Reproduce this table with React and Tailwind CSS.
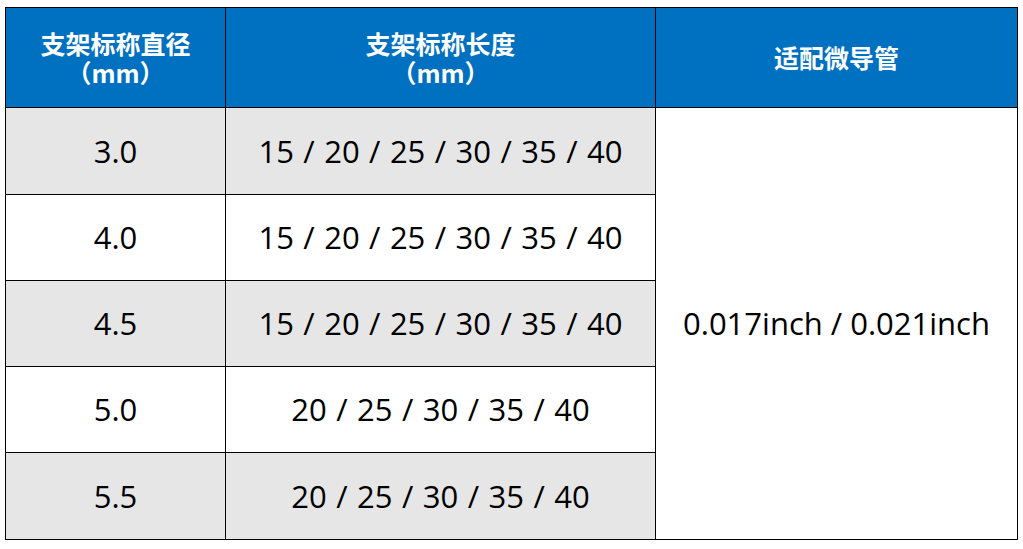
const rows = [
  { d: '3.0', l: '15 / 20 / 25 / 30 / 35 / 40', gray: true, h: 'h-[87px]' },
  { d: '4.0', l: '15 / 20 / 25 / 30 / 35 / 40', gray: false, h: 'h-[86px]' },
  { d: '4.5', l: '15 / 20 / 25 / 30 / 35 / 40', gray: true, h: 'h-[86px]' },
  { d: '5.0', l: '20 / 25 / 30 / 35 / 40', gray: false, h: 'h-[86px]' },
  { d: '5.5', l: '20 / 25 / 30 / 35 / 40', gray: true, h: 'h-[87px]' },
];

const head = "font-['Noto_Sans_CJK_SC',sans-serif] font-bold text-white text-[25px] leading-[29px] border border-black bg-[#0070C0] text-center align-middle";
const cell = "font-['Open_Sans','Noto_Sans_CJK_SC',sans-serif] text-[31px] text-black border border-black text-center align-middle";

export default function App() {
  return (
    <div className="w-[1023px] h-[549px] bg-white pt-[7px] pl-[5px]">
      <table className="border-collapse w-[1012px] table-fixed">
        <colgroup>
          <col className="w-[220px]" />
          <col className="w-[430px]" />
          <col className="w-[362px]" />
        </colgroup>
        <thead>
          <tr className="h-[100px]">
            <th className={head}>
              <div>支架标称直径</div>
              <div>（mm）</div>
            </th>
            <th className={head}>
              <div>支架标称长度</div>
              <div>（mm）</div>
            </th>
            <th className={head}>适配微导管</th>
          </tr>
        </thead>
        <tbody>
          {rows.map((r, i) => (
            <tr key={r.d} className={r.h}>
              <td className={cell + (r.gray ? ' bg-[#E6E6E6]' : ' bg-white')}>{r.d}</td>
              <td className={cell + ' [word-spacing:1.4px]' + (r.gray ? ' bg-[#E6E6E6]' : ' bg-white')}>{r.l}</td>
              {i === 0 && (
                <td rowSpan={5} className={cell + ' bg-white'}>
                  0.017inch / 0.021inch
                </td>
              )}
            </tr>
          ))}
        </tbody>
      </table>
    </div>
  );
}
